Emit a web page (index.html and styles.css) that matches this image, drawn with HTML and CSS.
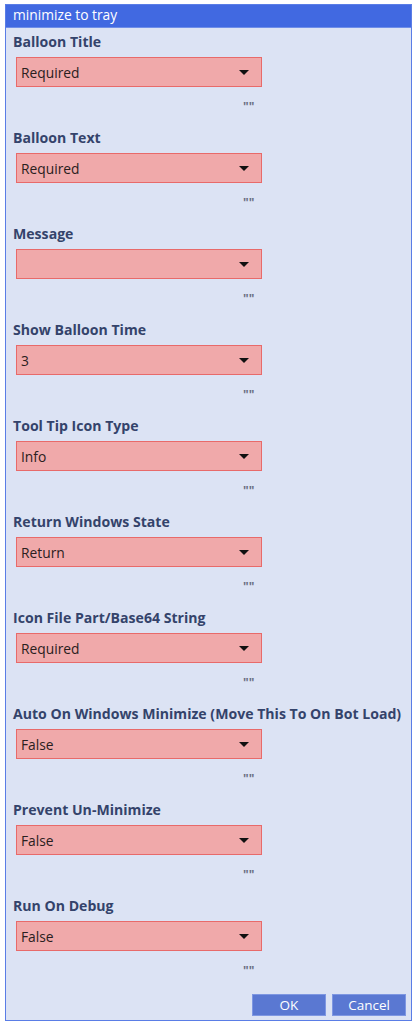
FILE: index.html
```html
<!DOCTYPE html>
<html>
<head>
	<title>minimize to tray</title>
	<meta http-equiv="Content-Type" content="text/html;charset=utf-8">
	<link rel="stylesheet" href="styles.css">
</head>
<body>
	<div class="window">
		<div class="titlebar">minimize to tray</div>
		<div class="form">
			<div class="field">
				<div class="label">Balloon Title</div>
				<div class="select"><span>Required</span><i class="arrow"></i></div>
				<div class="mark">""</div>
			</div>
			<div class="field">
				<div class="label">Balloon Text</div>
				<div class="select"><span>Required</span><i class="arrow"></i></div>
				<div class="mark">""</div>
			</div>
			<div class="field">
				<div class="label">Message</div>
				<div class="select"><span></span><i class="arrow"></i></div>
				<div class="mark">""</div>
			</div>
			<div class="field">
				<div class="label">Show Balloon Time</div>
				<div class="select"><span>3</span><i class="arrow"></i></div>
				<div class="mark">""</div>
			</div>
			<div class="field">
				<div class="label">Tool Tip Icon Type</div>
				<div class="select"><span>Info</span><i class="arrow"></i></div>
				<div class="mark">""</div>
			</div>
			<div class="field">
				<div class="label">Return Windows State</div>
				<div class="select"><span>Return</span><i class="arrow"></i></div>
				<div class="mark">""</div>
			</div>
			<div class="field">
				<div class="label">Icon File Part/Base64 String</div>
				<div class="select"><span>Required</span><i class="arrow"></i></div>
				<div class="mark">""</div>
			</div>
			<div class="field">
				<div class="label">Auto On Windows Minimize (Move This To On Bot Load)</div>
				<div class="select"><span>False</span><i class="arrow"></i></div>
				<div class="mark">""</div>
			</div>
			<div class="field">
				<div class="label">Prevent Un-Minimize</div>
				<div class="select"><span>False</span><i class="arrow"></i></div>
				<div class="mark">""</div>
			</div>
			<div class="field">
				<div class="label">Run On Debug</div>
				<div class="select"><span>False</span><i class="arrow"></i></div>
				<div class="mark">""</div>
			</div>
		</div>
		<div class="buttons">
			<div class="btn">OK</div>
			<div class="btn">Cancel</div>
		</div>
	</div>
</body>
</html>
```

FILE: styles.css
```css
body{margin:0;background:#fff;font-family:"Open Sans","Noto Sans",sans-serif;}
.window{margin:4px 0 0 5px;width:407px;height:1017px;box-sizing:border-box;border:1px solid #5a7de6;background:#dce3f4;display:flex;flex-direction:column;}
.titlebar{height:22px;line-height:20px;background:#4169e1;border-bottom:1px solid #6f8ee8;color:#fff;font-size:13.8px;padding-left:7px;}
.form{padding:4px 0 0 7px;}
.field{height:96px;}
.label{height:20px;line-height:20px;font-size:14.1px;font-weight:bold;color:#34436b;white-space:nowrap;}
.select{margin:5px 0 0 3px;width:246px;height:30px;box-sizing:border-box;border:1px solid #e86a6a;background:#f0a9aa;display:flex;align-items:center;padding:0 12px 0 4px;}
.select span{flex:1;font-size:13.8px;color:#2a2020;}
.arrow{width:0;height:0;border-left:5px solid transparent;border-right:5px solid transparent;border-top:5px solid #111;}
.mark{margin:12px 0 0 230px;height:16px;line-height:16px;font-size:12px;font-weight:bold;color:#6a6f82;}
.buttons{margin-top:auto;display:flex;justify-content:flex-end;gap:6px;padding:0 5px 4px 0;}
.btn{width:74px;height:22px;box-sizing:border-box;line-height:20px;border:1px solid #7e97e2;background:#5a78d2;color:#fff;font-size:13.5px;text-align:center;}
```
